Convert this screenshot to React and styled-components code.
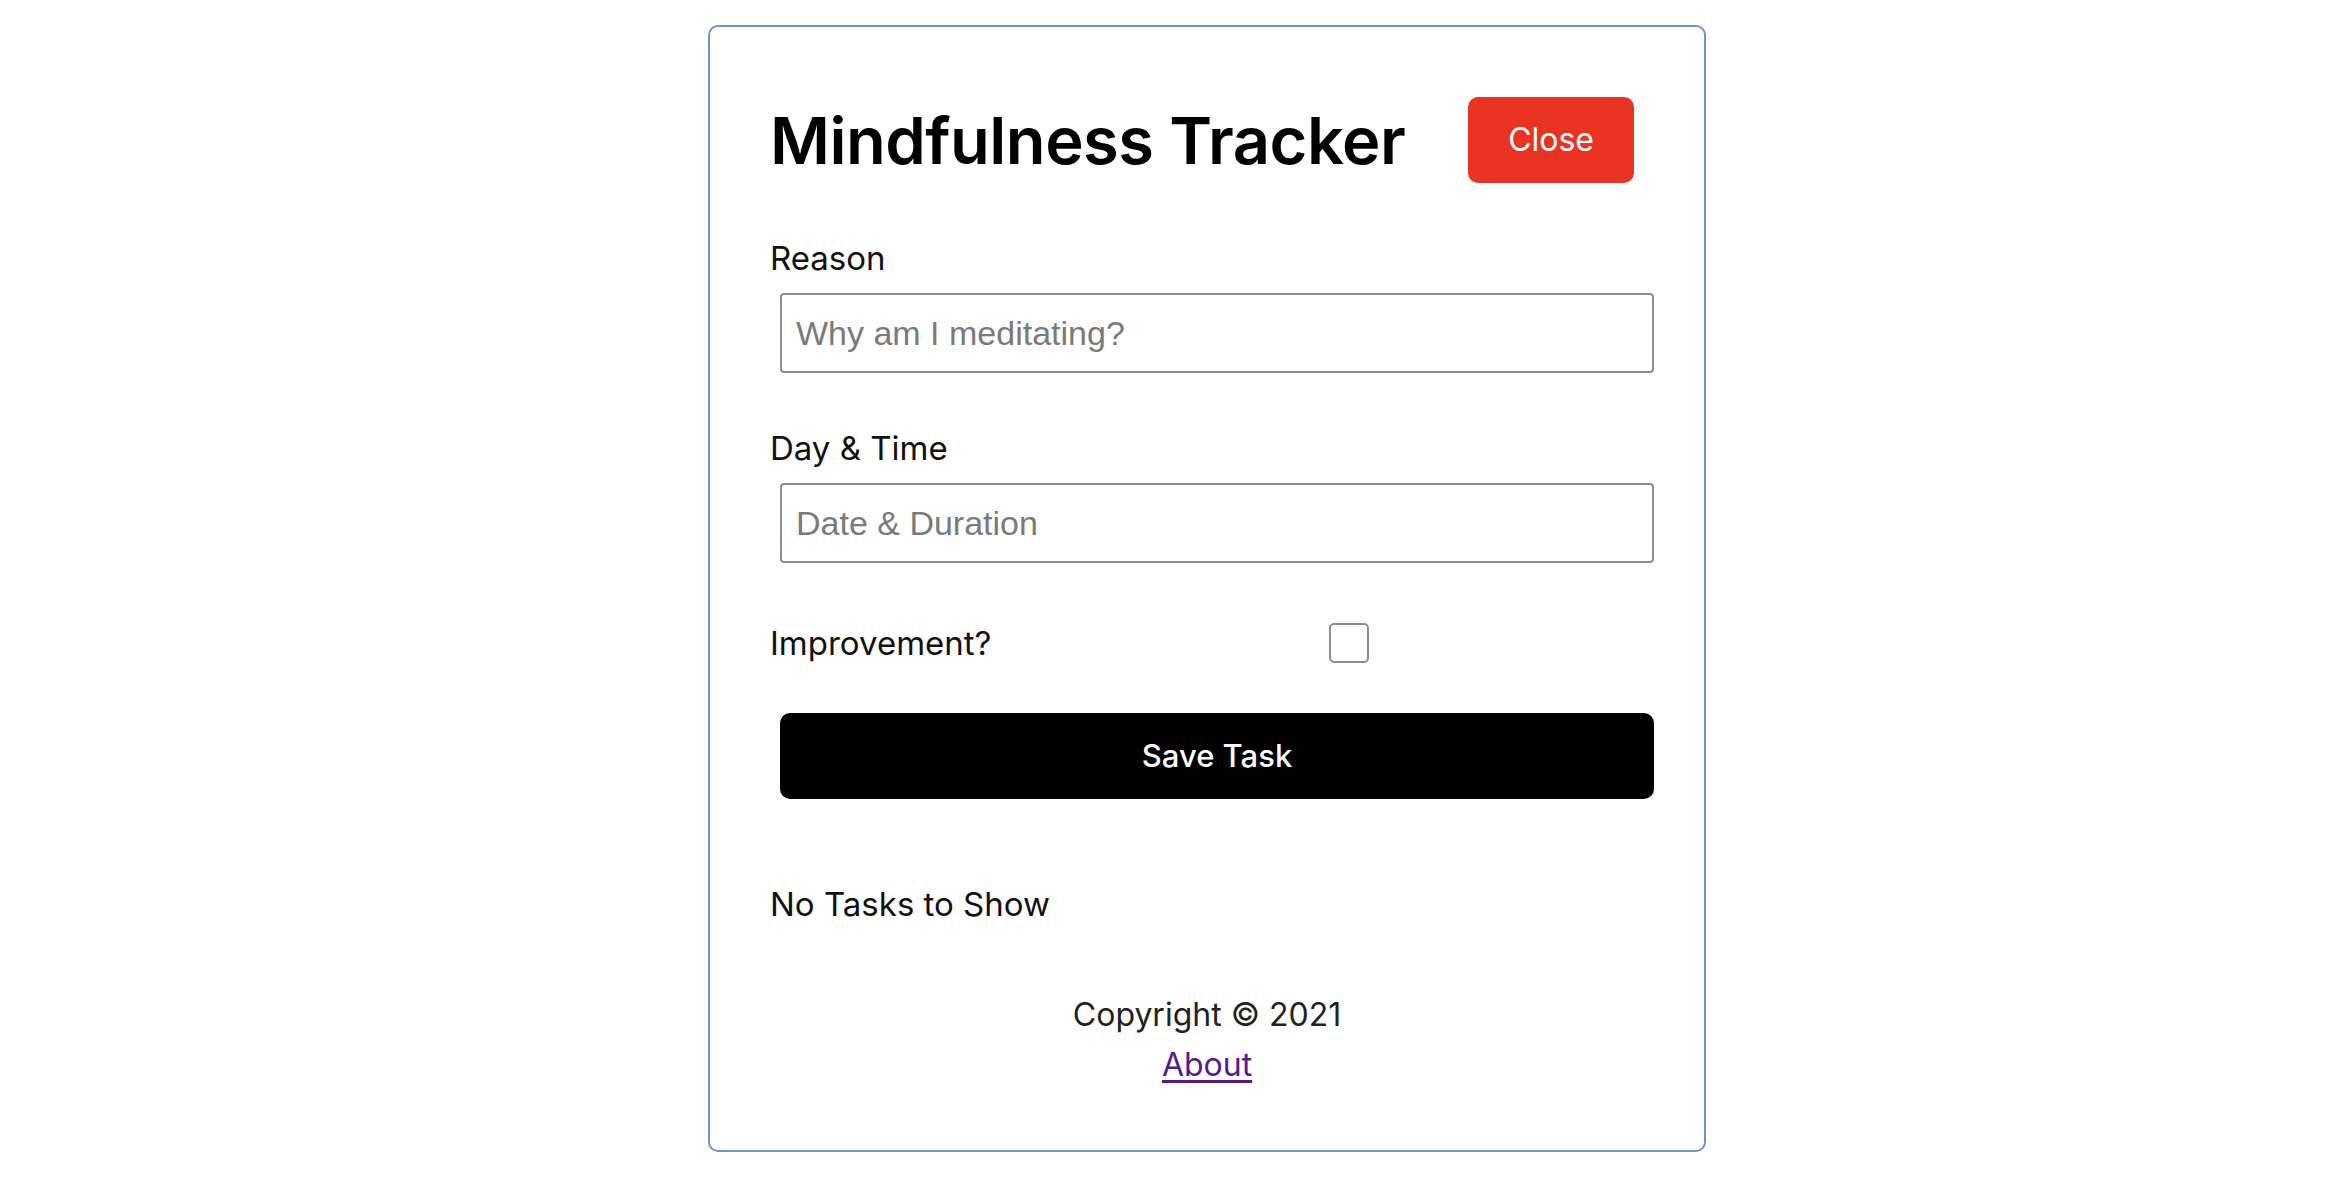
import React from "react";
import styled, { createGlobalStyle } from "styled-components";

const GlobalStyle = createGlobalStyle`
  * {
    box-sizing: border-box;
  }
  body {
    margin: 0;
    background: #fff;
    font-family: "Inter", "Noto Sans", sans-serif;
    color: #111;
  }
`;

const Page = styled.div`
  display: flex;
  justify-content: center;
  padding: 25px 0 0 62px;
`;

const Container = styled.div`
  width: 998px;
  border: 2px solid #6f94c8;
  border-radius: 10px;
  padding: 60px;
`;

const Header = styled.header`
  display: flex;
  align-items: center;
  justify-content: space-between;
  margin-bottom: 40px;
`;

const Title = styled.h1`
  margin: 0;
  font-size: 65px;
  font-weight: 600;
  letter-spacing: -0.5px;
  color: #000;
`;

const Button = styled.button`
  display: ${(props) => (props.block ? "block" : "inline-block")};
  width: ${(props) => (props.block ? "100%" : "auto")};
  margin: 10px;
  padding: 20px 40px;
  border: none;
  border-radius: 10px;
  background: ${(props) => props.color || "#000"};
  color: #fff;
  font-family: "Inter", "Noto Sans", sans-serif;
  font-size: ${(props) => (props.block ? "31px" : "32px")};
  font-weight: ${(props) => (props.block ? 500 : 400)};
  line-height: 46px;
  cursor: pointer;
`;

const Form = styled.form``;

const FormControl = styled.div`
  display: flow-root;
  margin: 40px 0;
  &:first-child {
    margin-top: 0;
  }
`;

const CheckControl = styled(FormControl)`
  display: flex;
  align-items: center;
  justify-content: space-between;
`;

const Label = styled.label`
  display: block;
  font-size: 33px;
  line-height: 50px;
  color: #111;
  flex: 1;
`;

const Input = styled.input`
  display: block;
  width: 100%;
  height: 80px;
  margin: 10px;
  padding: 6px 14px;
  border: 2px solid #8d8d8d;
  border-radius: 4px;
  font-family: "Liberation Sans", Arial, sans-serif;
  font-size: 34px;
  color: #222;
  &::placeholder {
    color: #7a7a7a;
  }
`;

const CheckWrap = styled.div`
  flex: 2;
  display: flex;
  justify-content: center;
  margin: 10px;
`;

const Checkbox = styled.input`
  appearance: none;
  margin: 0;
  width: 40px;
  height: 40px;
  border: 2px solid #8d8d8d;
  border-radius: 5px;
  background: #fff;
  cursor: pointer;
  &:checked {
    background: #0075ff;
    border-color: #0075ff;
  }
`;

const Empty = styled.p`
  margin: 80px 0 0;
  font-size: 33px;
  line-height: 50px;
  color: #111;
`;

const Footer = styled.footer`
  margin-top: 61px;
  text-align: center;
  font-size: 32px;
  line-height: 50px;
  color: #222;
`;

const FooterText = styled.p`
  margin: 0;
`;

const AboutLink = styled.a`
  color: #551a8b;
  text-decoration: underline;
  text-underline-offset: 4px;
`;

const App = () => {
  return (
    <>
      <GlobalStyle />
      <Page>
        <Container>
          <Header>
            <Title>Mindfulness Tracker</Title>
            <Button type="button" color="#e93323">
              Close
            </Button>
          </Header>
          <Form onSubmit={(e) => e.preventDefault()}>
            <FormControl>
              <Label>Reason</Label>
              <Input type="text" placeholder="Why am I meditating?" />
            </FormControl>
            <FormControl>
              <Label>Day &amp; Time</Label>
              <Input type="text" placeholder="Date & Duration" />
            </FormControl>
            <CheckControl>
              <Label>Improvement?</Label>
              <CheckWrap>
                <Checkbox type="checkbox" />
              </CheckWrap>
            </CheckControl>
            <Button type="submit" block>
              Save Task
            </Button>
          </Form>
          <Empty>No Tasks to Show</Empty>
          <Footer>
            <FooterText>Copyright &copy; 2021</FooterText>
            <AboutLink href="#about">About</AboutLink>
          </Footer>
        </Container>
      </Page>
    </>
  );
};

export default App;
